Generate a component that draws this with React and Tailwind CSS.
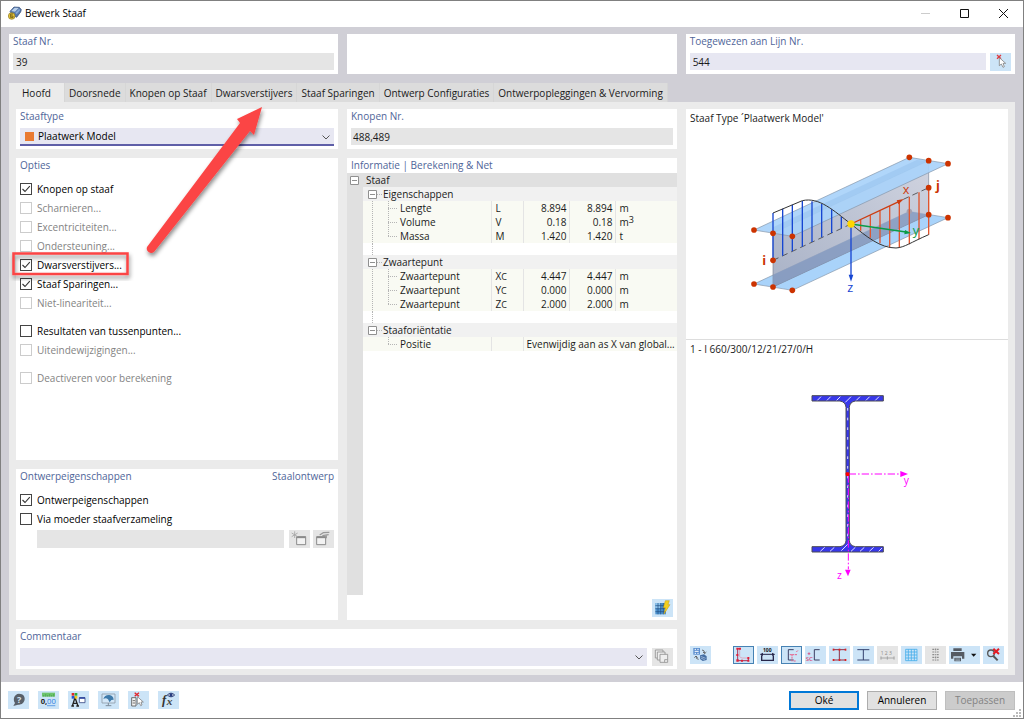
import React, { useState } from 'react';

const FLANGE = '#a9d3fa';
const NODE = '#cc3300';

/* ---------- small UI pieces ---------- */

const Panel = ({ title, aside, htmlFor, className = '', children }) => (
  <section className={`bg-white px-1 ${className}`}>
    {title && (
      <div className="flex justify-between leading-[15px] text-[#4f6599]">
        {htmlFor ? <label htmlFor={htmlFor}>{title}</label> : <h2>{title}</h2>}
        {aside && <span>{aside}</span>}
      </div>
    )}
    {children}
  </section>
);

const IconButton = ({ label, pressed, disabled, wide, children }) => {
  let tone = 'bg-[#cce4f7]';
  if (disabled) tone = 'bg-[#e5e5e5]';
  if (pressed) tone = 'bg-[#cce4f7] outline outline-1 -outline-offset-1 outline-[#4682b4]';
  return (
    <button
      type="button"
      aria-label={label}
      title={label}
      disabled={disabled}
      className={`h-[18px] shrink-0 ${wide ? 'w-[31px]' : 'w-[21px]'} ${tone}`}
    >
      <svg viewBox={wide ? '0 0 93 54' : '0 0 63 54'} className="block h-full w-full" fill="none">
        {children}
      </svg>
    </button>
  );
};

const Check = ({ id, label, defaultChecked, disabled }) => (
  <div className="flex h-[19px] items-center gap-[5px]">
    <span className="relative h-3 w-3 shrink-0">
      <input
        id={id}
        type="checkbox"
        defaultChecked={defaultChecked}
        disabled={disabled}
        className="peer block h-3 w-3 appearance-none border border-[#444] bg-white disabled:border-[#ccc]"
      />
      <svg
        viewBox="0 0 12 12"
        className="pointer-events-none absolute inset-0 hidden h-3 w-3 peer-checked:block"
        fill="none"
        stroke="#333"
        strokeWidth="1.1"
      >
        <path d="M2.5 6 L5 8.5 L9.8 3.2" />
      </svg>
    </span>
    <label htmlFor={id} className={`pt-px ${disabled ? 'text-[#838383]' : 'text-black'}`}>{label}</label>
  </div>
);

const Chevron = () => (
  <svg viewBox="0 0 8 5" className="pointer-events-none absolute right-1 top-[7px] h-[5px] w-2" fill="none" stroke="#555">
    <path d="M0.5 0.5 L4 4 L7.5 0.5" />
  </svg>
);

/* ---------- icons ---------- */

const PickIcon = () => (
  <>
    <path d="M21 6 L33 17 M33 6 L21 17" stroke="#e0383e" strokeWidth="4" />
    <path d="M28 14 V38 L34 33 L39 43 L43 41 L39 31 H47 Z" fill="#fff" stroke="#777" strokeWidth="2.2" />
  </>
);

const AppIcon = () => (
  <svg viewBox="0 0 42 42" className="h-[14px] w-[14px]">
    <path d="M6 16 L18 3 L34 4 L40 11 L38 18 L26 34 L12 26 Z" fill="#5578ab" stroke="#2c4672" strokeWidth="2" />
    <path d="M10 15 L20 5 L32 6 L21 17 Z" fill="#b9cfea" />
    <path d="M22 20 L33 9 L37 12 L26 25 Z" fill="#86a8d6" />
    <circle cx="11" cy="30" r="10" fill="#e3c33d" stroke="#8d7720" strokeWidth="2" />
    <path d="M15 24 H8 V35 H15 V30 H8" fill="none" stroke="#6d5a12" strokeWidth="2.6" />
  </svg>
);

const CSection = ({ x = 0 }) => (
  <path d={`M${x + 38} 11 H${x + 22} V42 H${x + 38}`} stroke="#3b3f63" strokeWidth="3" />
);

const IBeam = ({ color, dots }) => (
  <>
    <path d="M13 11 H49 M13 42 H49 M31 11 V42" stroke={color} strokeWidth="3" />
    {dots && [[13, 11], [31, 11], [49, 11], [13, 42], [31, 42], [49, 42]].map(([cx, cy]) => (
      <rect key={`${cx}-${cy}`} x={cx - 2} y={cy - 3} width="5" height="6" fill="#e02020" />
    ))}
  </>
);

/* ---------- member drawing ---------- */

const MemberDrawing = () => (
  <svg viewBox="-9 0 660 480" className="h-[160px] w-[220px]" fill="none" aria-label="Staaf Type">
    <defs>
      <linearGradient id="web" x1="0" y1="1" x2="1" y2="0">
        <stop offset="0" stopColor="#9aa5bd" />
        <stop offset="1" stopColor="#c8ccda" />
      </linearGradient>
    </defs>
    {/* bottom flange */}
    <path d="M42 432 L508 214 L624 233 L157 451 Z" fill={FLANGE} stroke="#8494a8" strokeWidth="2" />
    <path d="M99 441 L99 405 L508 214 L566 224 Z" fill="#84a3cf" />
    {/* web */}
    <path d="M99 280 L566 62 V224 L99 441 Z" fill="url(#web)" fillOpacity="0.85" stroke="#7c8698" strokeWidth="2" />
    <path d="M99 405 L508 214 L566 224 L99 441 Z" fill="#8399c0" fillOpacity="0.75" />
    <circle cx="508" cy="214" r="8" fill="#a5a0ae" />
    {/* top flange */}
    <path d="M42 270 L508 52 L624 71 L157 289 Z" fill={FLANGE} fillOpacity="0.92" stroke="#8494a8" strokeWidth="2" />
    <path d="M99 280 L99 262 L530 60 L566 62 Z" fill="#8fbce8" fillOpacity="0.4" />
    {/* member axis and distribution curve */}
    <path d="M99 361 L333 252" stroke="#444" strokeWidth="2.5" strokeDasharray="18 12" />
    <path d="M490 178 L566 143" stroke="#444" strokeWidth="2.5" strokeDasharray="18 12" />
    <path d="M99 219 V361 M128 206 V347 M157 194 V334 M187 183 V320 M216 184 V306 M245 192 V292 M275 208 V279 M304 230 V265" stroke="#1646d2" strokeWidth="4" />
    <path d="M362 239 V272 M391 226 V293 M420 212 V310 M449 198 V322 M478 184 V323 M508 170 V313 M537 157 V298 M566 143 V284" stroke="#e0552e" strokeWidth="4" />
    <path d="M99 219 L187 182 C238 170 282 213 333 252 C380 290 420 324 468 324 C495 322 510 308 566 284" stroke="#333" strokeWidth="3" />
    {/* axes */}
    <path d="M333 252 L478 184" stroke="#cc3c10" strokeWidth="4" />
    <path d="M492 177 L470 181 L475 193 Z" fill="#cc3c10" />
    <path d="M333 252 L498 276" stroke="#0a9c46" strokeWidth="4" />
    <path d="M513 279 L495 270 L493 283 Z" fill="#0a9c46" />
    <path d="M333 252 V408" stroke="#1646d2" strokeWidth="4" />
    <path d="M333 425 L326 404 H340 Z" fill="#1646d2" />
    {[[508, 52], [566, 62], [624, 71], [42, 270], [99, 280], [157, 289], [99, 361], [566, 143], [566, 224], [624, 233], [42, 432], [99, 441], [157, 451]].map(([cx, cy]) => (
      <circle key={`${cx}-${cy}`} cx={cx} cy={cy} r="8.5" fill={NODE} />
    ))}
    <circle cx="333" cy="252" r="11" fill="#ffd500" />
    <g fontSize="38" fontWeight="500">
      <text x="488" y="161" fill="#cc3c10">x</text>
      <text x="518" y="285" fill="#0a9c46">y</text>
      <text x="322" y="456" fill="#1646d2">z</text>
      <text x="67" y="374" fill={NODE} fontWeight="700">i</text>
      <text x="588" y="150" fill={NODE} fontWeight="700">j</text>
    </g>
  </svg>
);

const SectionDrawing = () => (
  <svg viewBox="-24 0 450 630" className="h-[210px] w-[150px]" fill="none" aria-label="Doorsnede">
    <path
      d="M96 47 H310 V63 H226 Q209 66 208 82 V482 Q209 497 226 500 H310 V516 H96 V500 H180 Q197 497 198 482 V82 Q197 66 180 63 H96 Z"
      fill="#3838ea"
      stroke="#4a4a55"
      strokeWidth="3"
    />
    <path
      d="M112 61 L123 50 M141 61 L152 50 M170 61 L181 50 M196 67 L213 50 M229 61 L240 50 M258 61 L269 50 M286 61 L297 50 M121 514 L134 502 M150 514 L163 502 M184 512 L203 493 M213 514 L226 502 M240 514 L253 502 M268 514 L281 502 M296 514 L306 504"
      stroke="#dedeff"
      strokeWidth="3"
    />
    <path d="M203 84 V480" stroke="#dedeff" strokeWidth="3" strokeDasharray="8 21" />
    <path d="M206 282 H360" stroke="#ff00ff" strokeWidth="3" strokeDasharray="22 6 5 6" />
    <path d="M205 286 V568" stroke="#ff00ff" strokeWidth="3" strokeDasharray="22 6 5 6" />
    <path d="M384 282 L361 273 V291 Z" fill="#ff00ff" />
    <path d="M204 589 L195 569 H212 Z" fill="#ff00ff" />
    <rect x="197" y="277" width="11" height="11" rx="3" fill="#ff0000" />
    <g fontSize="31" fill="#ff00ff">
      <text x="371" y="312">y</text>
      <text x="171" y="597">z</text>
    </g>
  </svg>
);

/* ---------- property tree ---------- */

const Expander = ({ label }) => (
  <button type="button" aria-label={label} className="block h-[9px] w-[9px] shrink-0 bg-white">
    <svg viewBox="0 0 9 9" className="block h-full w-full" fill="none" stroke="#909090">
      <path d="M0.5 0.5 H8.5 V8.5 H0.5 Z M2 4.5 H7" />
    </svg>
  </button>
);

const TREE = [
  {
    name: 'Eigenschappen',
    rows: [
      ['Lengte', 'L', '', '8.894', 'm'],
      ['Volume', 'V', '', '0.18', 'm', '3'],
      ['Massa', 'M', '', '1.420', 't'],
    ],
  },
  {
    name: 'Zwaartepunt',
    rows: [
      ['Zwaartepunt', 'X', 'C', '4.447', 'm'],
      ['Zwaartepunt', 'Y', 'C', '0.000', 'm'],
      ['Zwaartepunt', 'Z', 'C', '2.000', 'm'],
    ],
  },
  { name: 'Staaforiëntatie', rows: [['Positie', '', '', 'Evenwijdig aan as X van global...']] },
];

const Branch = ({ last, trunk }) => (
  <svg viewBox="0 0 36 14" className="h-[14px] w-9 shrink-0" fill="none" stroke="#b5b5b5" strokeDasharray="1 1">
    {trunk && <path d="M9.5 0 V14" />}
    <path d={last ? 'M25.5 0 V7' : 'M25.5 0 V14'} />
    <path d="M25 7.5 H35" />
  </svg>
);

const TreeTable = () => (
  <table className="w-full table-fixed border-collapse leading-[14px]">
    <colgroup>
      <col className="w-[128px]" />
      <col className="w-8" />
      <col className="w-[46px]" />
      <col className="w-[46px]" />
      <col />
    </colgroup>
    <tbody>
      <tr className="h-[14px] bg-[#e0e0e0]">
        <td colSpan={5} className="p-0 pl-[3px]">Staaf</td>
      </tr>
      {TREE.map((group, gi) => {
        const trunk = gi < TREE.length - 1;
        return (
          <React.Fragment key={group.name}>
            <tr className="h-[14px] bg-[#f1f1f1]">
              <td colSpan={5} className="p-0">
                <div className="flex h-[14px] items-center pl-[5px]">
                  <Expander label={group.name} />
                  <span className="mr-px w-[5px] border-t border-dotted border-[#b5b5b5]" />
                  <span>{group.name}</span>
                </div>
              </td>
            </tr>
            {group.rows.map(([label, symbol, sub, value, unit, sup], i) => (
              <tr key={symbol + label} className="h-[14px] bg-[#f9faf3]">
                <td className="border-r border-[#e4e4e4] p-0">
                  <div className="flex h-[14px] items-center gap-px">
                    <Branch trunk={trunk} last={i === group.rows.length - 1} />
                    <span>{label}</span>
                  </div>
                </td>
                <td className="border-r border-[#e4e4e4] p-0 pl-1">
                  <div className="flex h-[14px] items-center">
                    {symbol}
                    {sub && <span className="pt-[2px] text-[9px]">{sub}</span>}
                  </div>
                </td>
                {unit ? (
                  <>
                    <td className="border-r border-[#e4e4e4] p-0 pr-[2px] text-right">{value}</td>
                    <td className="border-r border-[#e4e4e4] p-0 pr-[2px] text-right">{value}</td>
                    <td className="p-0 pl-1">
                      <div className="flex h-[14px] items-center">
                        {unit}
                        {sup && <span className="pb-1 text-[9px]">{sup}</span>}
                      </div>
                    </td>
                  </>
                ) : (
                  <td colSpan={3} className="whitespace-nowrap p-0 pl-[3px]">{value}</td>
                )}
              </tr>
            ))}
            {trunk && (
              <tr className="h-3">
                <td colSpan={5} className="p-0">
                  <div className="ml-[9px] h-3 border-l border-dotted border-[#b5b5b5]" />
                </td>
              </tr>
            )}
          </React.Fragment>
        );
      })}
    </tbody>
  </table>
);

/* ---------- toolbars ---------- */

const ViewToolbar = () => (
  <div className="flex items-center gap-[3px] px-1 pb-[5px]">
    <IconButton label="Weergave wisselen">
      <path d="M10 6 H30 V26 H10 Z" fill="#5b8fd0" />
      <path d="M14 10 H18 M22 10 H26 M14 16 H26 M14 22 H18 M22 22 H26" stroke="#fff" strokeWidth="3" />
      <path d="M36 12 Q44 12 44 22 M39 18 L44 23 L49 18 M26 40 Q18 40 18 31 M13 35 L18 30 L23 35" stroke="#555" strokeWidth="2.5" />
      <path d="M30 28 L42 25 L50 31 L50 42 L38 45 L30 39 Z" fill="#456ea3" />
      <path d="M32 31 L47 37 M32 36 L44 41" stroke="#bcd3ee" strokeWidth="2" />
    </IconButton>
    <span className="flex-1" />
    <IconButton label="Spanningspunten" pressed>
      <path d="M12 8 H20 M14 8 V44 H46 V36" stroke="#a8325a" strokeWidth="3" />
      <path d="M20 9 V31 Q22 36 28 36 H44" stroke="#e58aa6" strokeWidth="2" />
      <path d="M10 5 H17 V11 H10 Z M18 5 H24 V11 H18 Z M10 24 H16 V30 H10 Z M10 40 H17 V47 H10 Z M24 41 H30 V47 H24 Z M43 41 H49 V47 H43 Z M43 33 H49 V39 H43 Z" fill="#e02038" />
    </IconButton>
    <IconButton label="Afmetingen">
      <path d="M14 28 V43 H49 V28" stroke="#26264a" strokeWidth="4" />
      <path d="M10 25 H53" stroke="#26264a" strokeWidth="3" />
      <path d="M10 25 L18 20 V30 Z M53 25 L45 20 V30 Z" fill="#26264a" />
      <text x="18" y="18" fontSize="15" fontWeight="700" fill="#111">100</text>
    </IconButton>
    <IconButton label="Hoofdassen" pressed>
      <CSection x={0} />
      <path d="M26 26 H50 M33 24 V46 M46 18 L52 12 M38 45 H46" stroke="#e8608a" strokeWidth="3" strokeDasharray="6 2" />
    </IconButton>
    <IconButton label="Afschuifmiddelpunt">
      <CSection x={6} />
      <path d="M8 23 H16 M12 19 V27" stroke="#d84a78" strokeWidth="2.5" />
      <text x="2" y="46" fontSize="18" fontWeight="600" fill="#d84a78">SC</text>
    </IconButton>
    <IconButton label="Punten"><IBeam color="#8b3048" dots /></IconButton>
    <IconButton label="Profiel"><IBeam color="#34426e" /></IconButton>
    <IconButton label="Nummering" disabled>
      <text x="11" y="26" fontSize="15" fill="#8a8a8a">1 2 3</text>
      <path d="M11 36 H52 M12 31 V41 M31 31 V41 M51 31 V41" stroke="#9a9a9a" strokeWidth="2.5" />
    </IconButton>
    <IconButton label="Raster">
      <path d="M14 10 H48 V44 H14 Z M22 10 V44 M31 10 V44 M40 10 V44 M14 18 H48 M14 27 H48 M14 36 H48" stroke="#46aeea" strokeWidth="2.5" />
    </IconButton>
    <IconButton label="Lagen" disabled>
      <path d="M22 10 H42 M22 18 H42 M22 26 H42 M22 34 H42 M22 42 H42" stroke="#8d8d8d" strokeWidth="3.5" strokeDasharray="5 2" />
      <path d="M32 6 V48" stroke="#aaa" strokeWidth="2" strokeDasharray="3 3" />
    </IconButton>
    <IconButton label="Afdrukken" wide>
      <path d="M13 7 H38 V15 H13 Z M6 18 H46 V38 H39 V31 H13 V38 H6 Z M16 35 H36 V46 H16 Z" fill="#555b63" />
      <path d="M19 39 H33 M19 43 H33" stroke="#cce4f7" strokeWidth="1.5" />
      <path d="M66 23 H82 L74 32 Z" fill="#111" />
    </IconButton>
    <IconButton label="Zoom herstellen">
      <circle cx="24" cy="22" r="10" stroke="#555" strokeWidth="4" />
      <path d="M31 30 L44 43" stroke="#555" strokeWidth="6" />
      <path d="M31 8 L48 24 M48 8 L31 24" stroke="#e31b23" strokeWidth="6" />
    </IconButton>
  </div>
);

const FooterTools = () => (
  <div className="flex gap-[9px]">
    <IconButton label="Help">
      <path d="M33 8 C46 8 51 17 50 25 C49 37 38 43 30 41 L16 45 L21 36 C14 26 18 9 33 8 Z" fill="#59616a" />
      <text x="27" y="35" fontSize="27" fontWeight="700" fill="#d9e6f2">?</text>
    </IconButton>
    <IconButton label="Eenheden">
      <path d="M12 5 H51 V17 H12 Z" fill="#6cc46c" />
      <path d="M17 12 V17 M23 9 V17 M29 12 V17 M35 9 V17 M41 12 V17 M47 9 V17" stroke="#3a8f3f" strokeWidth="1.5" />
      <text x="8" y="40" fontSize="23" fontWeight="700" fill="#222">0,</text>
      <text x="27" y="40" fontSize="23" fill="#2f7de0">00</text>
      <path d="M27 44 H52" stroke="#2f7de0" strokeWidth="2" />
    </IconButton>
    <IconButton label="Weergave-eigenschappen">
      <path d="M13 45 L21 20 L30 45 M15 37 H28 M10 45 H18 M25 45 H33" stroke="#222" strokeWidth="4" />
      <path d="M11 6 H19 V14 H11 Z" fill="#e22626" />
      <path d="M20 6 H28 V14 H20 Z" fill="#2cae3a" />
      <path d="M11 15 H19 V23 H11 Z" fill="#2456d6" />
      <path d="M20 15 H28 V23 H20 Z" fill="#f2c61d" />
      <path d="M34 20 H51 V35 H34 Z" fill="#fff" stroke="#3a4a86" strokeWidth="2.5" />
      <path d="M34 21 H51" stroke="#3048a0" strokeWidth="5" />
    </IconButton>
    <IconButton label="Scherm">
      <path d="M12 9 H51 V36 H12 Z" fill="#d3e7f8" stroke="#8e9ba8" strokeWidth="2.5" />
      <path d="M16 24 Q20 11 34 12 Q46 14 47 26 L40 27 L35 34 L30 25 Q24 19 16 24 Z" fill="#3f7bab" />
      <path d="M31 36 V44 M23 44 H40" stroke="#7d8b99" strokeWidth="3" />
    </IconButton>
    <IconButton label="Selectie">
      <path d="M20 5 L33 16 M33 5 L20 16" stroke="#e0262c" strokeWidth="4" />
      <path d="M11 20 H24 V45 H11 Z" fill="#f5f5f5" stroke="#555" strokeWidth="2.5" />
      <path d="M14 29 H21 M14 36 H21" stroke="#555" strokeWidth="2.5" />
      <path d="M28 17 V40 L34 35 L38 44 L42 42 L39 33 H46 Z" fill="#fff" stroke="#777" strokeWidth="2.2" />
    </IconButton>
    <IconButton label="Formule">
      <text x="12" y="38" fontSize="38" fontStyle="italic" fontWeight="700" fontFamily="Liberation Serif, serif" fill="#333">f</text>
      <text x="26" y="42" fontSize="34" fontStyle="italic" fontWeight="700" fontFamily="Liberation Serif, serif" fill="#444">x</text>
      <path d="M28 12 Q39 1 50 12 Q39 23 28 12 Z" fill="#fff" stroke="#2c3f78" strokeWidth="3" />
      <circle cx="39" cy="12" r="5" fill="#263c80" />
    </IconButton>
  </div>
);

/* ---------- dialog ---------- */

const TABS = [
  'Hoofd',
  'Doorsnede',
  'Knopen op Staaf',
  'Dwarsverstijvers',
  'Staaf Sparingen',
  'Ontwerp Configuraties',
  'Ontwerpopleggingen & Vervorming',
];

const OPTIONS = [
  [
    ['Knopen op staaf', true, false],
    ['Scharnieren...', false, true],
    ['Excentriciteiten...', false, true],
    ['Ondersteuning...', false, true],
    ['Dwarsverstijvers...', true, false],
    ['Staaf Sparingen...', true, false],
    ['Niet-lineariteit...', false, true],
  ],
  [
    ['Resultaten van tussenpunten...', false, false],
    ['Uiteindewijzigingen...', false, true],
  ],
  [['Deactiveren voor berekening', false, true]],
];

/* Callout frame and arrow pointing at the stiffener tab */
const Callout = () => (
  <svg className="pointer-events-none absolute -left-px -top-px h-[300px] w-[340px] overflow-visible" fill="none">
    <defs>
      <filter id="drop" x="-10%" y="-20%" width="130%" height="150%">
        <feDropShadow dx="1" dy="3" stdDeviation="2" floodColor="#000" floodOpacity="0.45" />
      </filter>
    </defs>
    <g filter="url(#drop)">
      <path d="M13.5 253.5 H127.5 V274 H13.5 Z" stroke="#fb4444" strokeWidth="2.5" />
    </g>
    <g filter="url(#drop)">
      <path
        d="M147 247 L240 123 L237 119 L262 107 L254 135 L250 131 L154 252 A4.5 4.5 0 0 1 147 247 Z"
        fill="#fb4444"
      />
    </g>
  </svg>
);

export default function App() {
  const [activeTab, setActiveTab] = useState('Hoofd');

  return (
    <div className="relative flex min-h-screen flex-col border border-[#808080] bg-[#d0cfd6] font-['Open_Sans','Noto_Sans',sans-serif] text-[10px] text-[#1a1a1a]">
      {/* Title bar */}
      <header className="flex h-[26px] items-center bg-white pb-[2px] pl-[7px] pr-[14px]">
        <AppIcon />
        <h1 className="ml-[3px] text-black">Bewerk Staaf</h1>
        <div className="ml-auto flex gap-7">
          <button type="button" aria-label="Minimaliseren" disabled>
            <svg viewBox="0 0 11 11" className="h-[11px] w-[11px]" stroke="#ccc"><path d="M1 5.5 H10" /></svg>
          </button>
          <button type="button" aria-label="Maximaliseren">
            <svg viewBox="0 0 11 11" className="h-[11px] w-[11px]" fill="none" stroke="#111"><path d="M1.5 1.5 H9.5 V9.5 H1.5 Z" /></svg>
          </button>
          <button type="button" aria-label="Sluiten">
            <svg viewBox="0 0 11 11" className="h-[11px] w-[11px]" stroke="#111"><path d="M1 1 L10 10 M10 1 L1 10" /></svg>
          </button>
        </div>
      </header>

      {/* Member number / line number */}
      <div className="grid grid-cols-3 gap-[9px] px-2 pt-[7px]">
        <Panel title="Staaf Nr." htmlFor="member-no" className="pb-1">
          <input id="member-no" readOnly defaultValue="39" className="mt-1 block h-[17px] w-full bg-[#e5e5e5] px-[3px]" />
        </Panel>
        <Panel />
        <Panel title="Toegewezen aan Lijn Nr." htmlFor="line-no" className="pb-1">
          <div className="mt-1 flex h-[17px] gap-1">
            <input id="line-no" defaultValue="544" className="h-[17px] min-w-0 flex-1 bg-[#e7e7f2] px-[3px]" />
            <IconButton label="Lijn selecteren"><PickIcon /></IconButton>
          </div>
        </Panel>
      </div>

      {/* Tabs */}
      <nav role="tablist" className="mt-[9px] flex h-[19px] pl-2">
        {TABS.map((tab) => (
          <button
            key={tab}
            type="button"
            role="tab"
            aria-selected={tab === activeTab}
            onClick={() => setActiveTab(tab)}
            className={`whitespace-nowrap border-r border-[#d6d6d6] pt-[2px] ${
              tab === activeTab ? 'bg-[#ebebeb] px-[13px]' : 'bg-[#dcdcdc] px-1'
            }`}
          >
            {tab}
          </button>
        ))}
      </nav>

      {/* Tab content */}
      <main className="mx-2 mb-[7px] grid flex-1 grid-cols-[322fr_330fr_322fr] grid-rows-[1fr_auto] gap-[9px] bg-[#ebebeb] px-[7px] pb-[6px] pt-[7px]">
        <div className="flex flex-col gap-[9px]">
          <Panel title="Staaftype" htmlFor="member-type" className="pb-[3px]">
            <div className="relative mt-1">
              <select id="member-type" className="block h-[18px] w-full appearance-none border-b-2 border-[#5f5fa8] bg-[#e7e7f2] pl-[18px] text-black">
                <option>Plaatwerk Model</option>
              </select>
              <span className="pointer-events-none absolute left-[5px] top-[4px] h-[9px] w-[9px] bg-[#e97a32]" />
              <Chevron />
            </div>
          </Panel>

          <Panel title="Opties" className="flex-[2]">
            <div className="mt-[6px] flex flex-col gap-[9px]">
              {OPTIONS.map((group) => (
                <div key={group[0][0]}>
                  {group.map(([label, checked, disabled]) => (
                    <Check key={label} id={label} label={label} defaultChecked={checked} disabled={disabled} />
                  ))}
                </div>
              ))}
            </div>
          </Panel>

          <Panel title="Ontwerpeigenschappen" aside="Staalontwerp" className="flex-1">
            <div className="mt-[6px]">
              <Check id="design-props" label="Ontwerpeigenschappen" defaultChecked />
              <Check id="via-parent" label="Via moeder staafverzameling" />
            </div>
            <div className="mt-[2px] flex pl-[17px]">
              <input aria-label="Staafverzameling" disabled className="mr-[5px] h-[18px] min-w-0 flex-1 bg-[#e5e5e5]" />
              <div className="flex gap-[3px]">
                <IconButton label="Nieuw" disabled>
                  <path d="M23 20 H50 V44 H23 Z" fill="#f2f2f2" stroke="#8a8a8a" strokeWidth="3" />
                  <path d="M23 22 H50" stroke="#8a8a8a" strokeWidth="5" />
                  <path d="M17 4 V24 M8 9 L26 20 M26 9 L8 20" stroke="#a5a5a5" strokeWidth="2.5" />
                </IconButton>
                <IconButton label="Bewerken" disabled>
                  <path d="M11 20 H38 V44 H11 Z" fill="#f2f2f2" stroke="#8a8a8a" strokeWidth="3" />
                  <path d="M11 22 H38" stroke="#8a8a8a" strokeWidth="5" />
                  <path d="M20 15 L31 8 L49 7 M28 17 L47 14 M40 17 V25" stroke="#999" strokeWidth="3.5" />
                </IconButton>
              </div>
            </div>
          </Panel>
        </div>

        <div className="flex flex-col gap-[9px]">
          <Panel title="Knopen Nr." htmlFor="nodes" className="pb-1">
            <input id="nodes" readOnly defaultValue="488,489" className="mt-1 block h-[17px] w-full bg-[#e5e5e5] px-[2px]" />
          </Panel>

          <section className="flex flex-1 flex-col bg-white">
            <h2 className="px-1 leading-[15px] text-[#4f6599]">Informatie | Berekening &amp; Net</h2>
            <div className="flex flex-1">
              <div className="w-4 shrink-0 bg-[#e0e0e0] pl-[3px] pt-[3px]">
                <Expander label="Staaf" />
              </div>
              <div className="min-w-0 flex-1">
                <TreeTable />
              </div>
            </div>
            <div className="flex justify-end pb-[3px] pr-1 pt-1">
              <IconButton label="Herberekenen">
                <path d="M10 12 H42 V46 H10 Z" fill="#4d93cf" />
                <path d="M10 12 H26 V29 H10 Z" fill="#8cc2ea" />
                <path d="M10 29 H42 M10 20 H42 M10 38 H42 M18 12 V46 M26 12 V46 M34 12 V46" stroke="#1d4c82" strokeWidth="2" />
                <path d="M40 5 H52 L48 17 H54 L36 45 L40 26 H34 Z" fill="#f4cf1c" stroke="#c79a12" strokeWidth="1.5" />
              </IconButton>
            </div>
          </section>
        </div>

        {/* Preview column */}
        <section className="row-span-2 flex flex-col bg-white">
          <div className="h-[231px] border-b border-[#ddd]">
            <p className="px-1 pt-px leading-4">Staaf Type ´Plaatwerk Model'</p>
            <div className="mt-[14px] flex justify-center"><MemberDrawing /></div>
          </div>
          <div className="flex-1">
            <p className="px-1 pt-px leading-4">1 - I 660/300/12/21/27/0/H</p>
            <div className="mt-[23px] flex justify-center"><SectionDrawing /></div>
          </div>
          <ViewToolbar />
        </section>

        <Panel title="Commentaar" htmlFor="comment" className="col-span-2 pb-[3px]">
          <div className="mt-1 flex gap-[5px]">
            <div className="relative flex-1">
              <select id="comment" className="block h-[18px] w-full appearance-none bg-[#e7e7f2]">
                <option />
              </select>
              <Chevron />
            </div>
            <IconButton label="Kopiëren" disabled>
              <g fill="#eee" stroke="#8f8f8f" strokeWidth="2.5">
                <path d="M10 6 H33 V30 H10 Z" />
                <path d="M16 12 H39 V36 H16 Z" />
                <path d="M24 19 H47 V43 H24 Z" />
                <path d="M38 43 V35 H47" />
              </g>
            </IconButton>
          </div>
        </Panel>
      </main>

      {/* Footer */}
      <footer className="relative flex h-9 items-center justify-between bg-white pl-[7px] pr-2">
        <FooterTools />
        <div className="flex gap-2">
          <button type="button" className="h-[19px] w-[70px] border-2 border-[#0078d7] bg-[#e1e1e1] leading-3 text-black">Oké</button>
          <button type="button" className="h-[19px] w-[70px] border border-[#adadad] bg-[#e1e1e1] leading-3 text-black">Annuleren</button>
          <button type="button" disabled className="h-[19px] w-[70px] border border-[#bfbfbf] bg-[#cccccc] leading-3 text-[#838383]">Toepassen</button>
        </div>
        <svg viewBox="0 0 9 9" className="absolute bottom-0 right-px h-[9px] w-[9px]" fill="#bbb">
          <path d="M6 0 H8 V2 H6 Z M3 3 H5 V5 H3 Z M6 3 H8 V5 H6 Z M0 6 H2 V8 H0 Z M3 6 H5 V8 H3 Z M6 6 H8 V8 H6 Z" />
        </svg>
      </footer>

      <Callout />
    </div>
  );
}
